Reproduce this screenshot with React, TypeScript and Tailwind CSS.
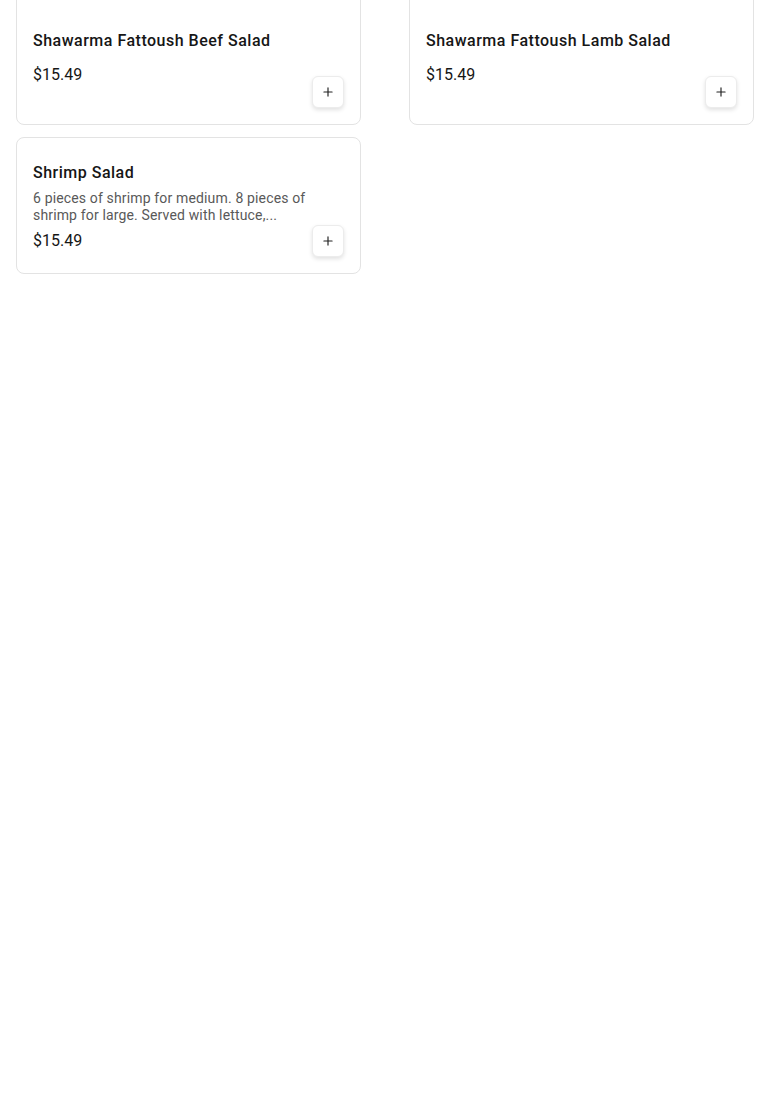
import { Plus } from "lucide-react"

type Item = {
  name: string
  description?: string
  price: string
}

const items: Item[] = [
  { name: "Shawarma Fattoush Beef Salad", price: "$15.49" },
  { name: "Shawarma Fattoush Lamb Salad", price: "$15.49" },
  {
    name: "Shrimp Salad",
    description: "6 pieces of shrimp for medium. 8 pieces of shrimp for large. Served with lettuce,...",
    price: "$15.49",
  },
]

function MenuCard({ item }: { item: Item }) {
  return (
    <div className="relative flex min-h-[137px] flex-col justify-center rounded-lg border border-[#e3e3e3] bg-white px-4 pt-[11px] pb-2">
      <div className="flex flex-col gap-[5px] pr-4">
        <h3 className="text-base leading-6 font-medium tracking-[0.5px] text-[#161616]">{item.name}</h3>
        <p className="line-clamp-2 text-sm leading-[17px] tracking-[0.15px] text-[#595959]">{item.description}</p>
        <span className="text-base leading-6 text-[#161616]">{item.price}</span>
      </div>
      <button className="absolute right-4 bottom-4 flex h-8 w-8 items-center justify-center rounded-md border border-[#ececec] bg-white shadow-[0_2px_4px_rgba(0,0,0,0.12)]">
        <Plus className="h-3.5 w-3.5 text-[#222]" strokeWidth={2} />
      </button>
    </div>
  )
}

export default function App() {
  return (
    <div className="min-h-[1100px] bg-white" style={{ fontFamily: "Roboto, 'Liberation Sans', sans-serif" }}>
      <div className="-mt-3 grid grid-cols-2 gap-x-12 gap-y-3 px-4">
        {items.map((item, index) => (
          <MenuCard key={index} item={item} />
        ))}
      </div>
    </div>
  )
}
